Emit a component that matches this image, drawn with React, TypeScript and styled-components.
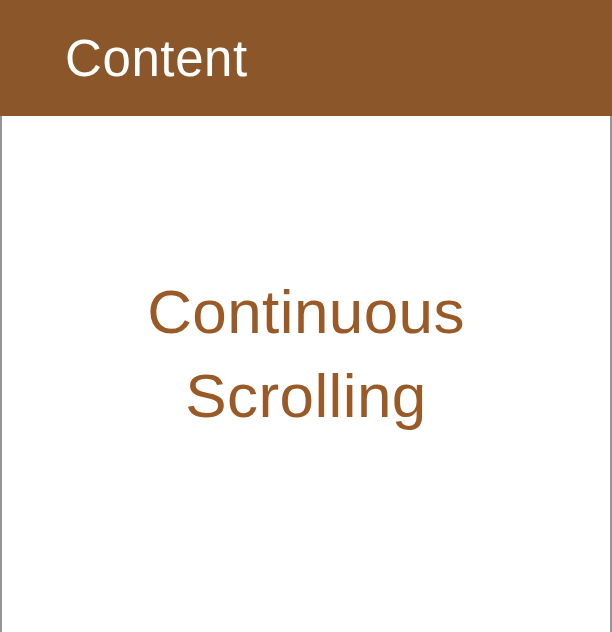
import React from "react";
import styled, { createGlobalStyle } from "styled-components";

const GlobalStyle = createGlobalStyle`
  html, body {
    margin: 0;
    padding: 0;
    background: #ffffff;
  }
  body {
    font-family: "Liberation Sans", Arial, sans-serif;
  }
`;

const Page = styled.div`
  width: 612px;
  height: 632px;
  display: flex;
  flex-direction: column;
  overflow: hidden;
`;

const Header = styled.header`
  height: 116px;
  flex-shrink: 0;
  background: #8b572a;
  display: flex;
  align-items: center;
  padding-left: 65px;
  box-sizing: border-box;
`;

const Title = styled.h1`
  margin: 0;
  color: #ffffff;
  font-size: 51px;
  font-weight: 400;
  letter-spacing: 0.6px;
`;

const Body = styled.main`
  flex: 1;
  border-left: 2px solid #959595;
  border-right: 2px solid #959595;
  display: flex;
  justify-content: center;
  padding-top: 154px;
  box-sizing: border-box;
`;

const Message = styled.p`
  margin: 0;
  color: #9a5a27;
  font-size: 62px;
  line-height: 84px;
  text-align: center;
  letter-spacing: 0.4px;
`;

/** content placeholder page */
const App = () => {
  return (
    <>
      <GlobalStyle />
      <Page>
        <Header>
          <Title>Content</Title>
        </Header>
        <Body>
          <Message>
            Continuous
            <br />
            Scrolling
          </Message>
        </Body>
      </Page>
    </>
  );
};

export default App;
